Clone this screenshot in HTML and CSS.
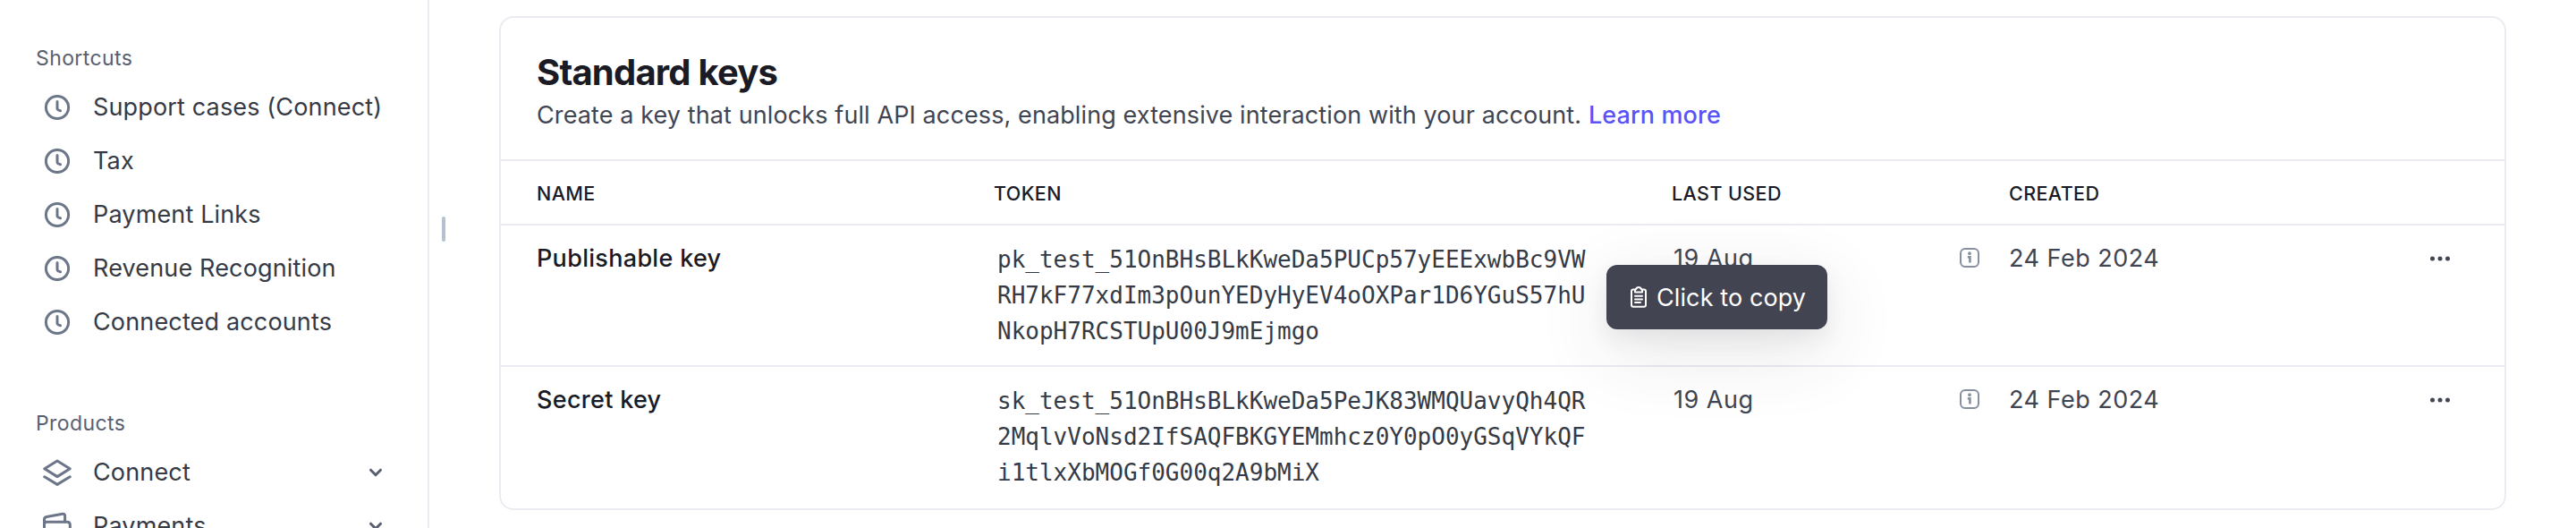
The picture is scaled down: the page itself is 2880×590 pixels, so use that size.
FILE: index.html
```html
<!DOCTYPE html>
<html lang="en">
<head>
<meta charset="utf-8">
<title>API keys</title>
<link rel="stylesheet" href="styles.css">
</head>
<body>
<svg class="defs" width="0" height="0">
  <symbol id="clock" viewBox="0 0 32 32"><circle cx="16" cy="16" r="12.6"/><path d="M16 9.6V17.2Q16 18.4 17.2 18.9L19.6 19.8"/></symbol>
  <symbol id="layers" viewBox="0 0 32 32"><path d="M16 3L30.2 11.8L16 20.6L1.8 11.8Z"/><path d="M1.8 20.8L16 29.4L30.2 20.8"/></symbol>
  <symbol id="wallet" viewBox="0 0 32 32"><path d="M1.5 30V8.6Q1.5 6 4.2 5.5L22 2.3Q24.6 2 24.6 4.5V11"/><path d="M1.5 14Q1.5 11.3 4.5 11.3H27Q30.3 11.3 30.3 14.5V30"/></symbol>
  <symbol id="chevron" viewBox="0 0 16 16"><path d="M2.5 5.2L8 10.8L13.5 5.2"/></symbol>
  <symbol id="info" viewBox="0 0 22 22"><rect x="1" y="1" width="20" height="20" rx="5"/><path class="fine" d="M8.8 10.2H11.4V16.4"/><circle class="dot" cx="11" cy="6.2" r="1.9"/></symbol>
  <symbol id="more" viewBox="0 0 24 8"><circle cx="3.5" cy="4" r="2.5"/><circle cx="12" cy="4" r="2.5"/><circle cx="20.5" cy="4" r="2.5"/></symbol>
</svg>
<div class="app">
  <nav class="sidebar">
    <h2 class="group">Shortcuts</h2>
    <ul class="links">
      <li class="link"><svg class="icon"><use href="#clock"/></svg><span>Support cases (Connect)</span></li>
      <li class="link"><svg class="icon"><use href="#clock"/></svg><span>Tax</span></li>
      <li class="link"><svg class="icon"><use href="#clock"/></svg><span>Payment Links</span></li>
      <li class="link"><svg class="icon"><use href="#clock"/></svg><span>Revenue Recognition</span></li>
      <li class="link"><svg class="icon"><use href="#clock"/></svg><span>Connected accounts</span></li>
    </ul>
    <h2 class="group products">Products</h2>
    <ul class="links">
      <li class="link"><svg class="icon"><use href="#layers"/></svg><span>Connect</span><svg class="chevron"><use href="#chevron"/></svg></li>
      <li class="link"><svg class="icon"><use href="#wallet"/></svg><span>Payments</span><svg class="chevron"><use href="#chevron"/></svg></li>
    </ul>
  </nav>
  <div class="gutter"><div class="handle"></div></div>
  <main class="card">
    <header class="head">
      <h1>Standard keys</h1>
      <p>Create a key that unlocks full API access, enabling extensive interaction with your account. <a>Learn more</a></p>
    </header>
    <div class="row labels"><span>NAME</span><span>TOKEN</span><span class="label-used">LAST USED</span><span></span><span>CREATED</span><span></span></div>
    <div class="row key">
      <span class="name">Publishable key</span>
      <code>pk_test_51OnBHsBLkKweDa5PUCp57yEEExwbBc9VWRH7kF77xdIm3pOunYEDyHyEV4oOXPar1D6YGuS57hUNkopH7RCSTUpU00J9mEjmgo</code>
      <span class="date used">19 Aug</span>
      <svg class="info"><use href="#info"/></svg>
      <span class="date">24 Feb 2024</span>
      <svg class="more"><use href="#more"/></svg>
      <div class="tooltip">
        <svg class="clip" viewBox="0 0 18 24"><rect x="1" y="3.6" width="16" height="19.2" rx="2"/><path class="clasp" d="M5 6.4V4.4Q5 3.4 6 3.2Q6.8 1 9 1T12 3.2Q13 3.4 13 4.4V6.4Z"/><path d="M5 10.8H13M5 14.4H13M5 18H11"/></svg>
        <span>Click to copy</span>
      </div>
    </div>
    <div class="row key last">
      <span class="name">Secret key</span>
      <code>sk_test_51OnBHsBLkKweDa5PeJK83WMQUavyQh4QR2MqlvVoNsd2IfSAQFBKGYEMmhcz0Y0pO0yGSqVYkQFi1tlxXbMOGf0G00q2A9bMiX</code>
      <span class="date used">19 Aug</span>
      <svg class="info"><use href="#info"/></svg>
      <span class="date">24 Feb 2024</span>
      <svg class="more"><use href="#more"/></svg>
    </div>
  </main>
</div>
</body>
</html>
```
FILE: styles.css
```css
* { box-sizing: border-box; margin: 0; padding: 0; }
body { background: #fff; font-family: Inter, "Liberation Sans", sans-serif; color: #353a44; overflow: hidden; }
.defs { display: block; position: absolute; }
.app { display: flex; height: 590px; overflow: hidden; }

.sidebar { width: 480px; flex: none; border-right: 2px solid #ebebf2; padding: 49px 48px 0 40px; overflow: hidden; }
.group { font-size: 23px; font-weight: 400; line-height: 32px; letter-spacing: 0.4px; color: #596171; margin-bottom: 9px; }
.products { margin-top: 67px; }
.links { list-style: none; }
.link { display: flex; align-items: center; height: 60px; padding-left: 8px; font-size: 27px; letter-spacing: 0.15px; }
.link span { padding-bottom: 2px; }
.icon { width: 32px; height: 32px; margin-right: 24px; flex: none; fill: none; stroke: #6c7688; stroke-width: 3; stroke-linecap: round; stroke-linejoin: round; }
.chevron { width: 16px; height: 16px; margin: 0 2px 0 auto; fill: none; stroke: #596171; stroke-width: 3; stroke-linecap: round; stroke-linejoin: round; }

.gutter { width: 78px; flex: none; padding: 242px 0 0 14px; }
.handle { width: 4px; height: 28px; border-radius: 2px; background: #b6c1cf; }

.card { width: 2244px; height: 552px; margin-top: 18px; border: 2px solid #ebebf2; border-radius: 16px; flex: none; }
.head { height: 160px; padding: 35px 40px 0; border-bottom: 2px solid #ebebf2; }
.head h1 { font-size: 40px; font-weight: 700; line-height: 52px; color: #1a1b25; letter-spacing: -0.8px; }
.head p { font-size: 27px; line-height: 44px; color: #414552; white-space: nowrap; letter-spacing: 0.105px; }
.head a { color: #5b53f5; font-weight: 500; }

.row { display: grid; grid-template-columns: 511px 757px 323px 55px 470px 1fr; padding-left: 40px; position: relative; }
.labels { height: 72px; padding-top: 2px; align-items: center; border-bottom: 2px solid #ebebf2; font-size: 21.5px; font-weight: 500; color: #1a1b25; letter-spacing: 0.4px; }
.label-used { padding-left: 1px; }
.key { height: 158px; padding-top: 17px; align-items: start; border-bottom: 2px solid #ebebf2; font-size: 27px; line-height: 40px; }
.last { border-bottom: 0; }
.name { font-weight: 500; color: #1a1b25; letter-spacing: 0.3px; }
.key code { font-family: "DejaVu Sans Mono", monospace; font-size: 26px; line-height: 40px; width: 668px; padding: 1px 0 0 4px; word-break: break-all; color: #353a44; }
.date { color: #414552; letter-spacing: 0.5px; }
.used { padding-left: 3px; }
.info { width: 22px; height: 22px; margin-top: 8px; fill: none; stroke: #8790a0; stroke-width: 2; }
.fine { stroke-width: 2.6; }
.dot { fill: #8790a0; stroke: none; }
.more { width: 24px; height: 8px; margin-top: 16px; fill: #414552; }

.tooltip { position: absolute; left: 1236px; top: 44px; width: 247px; height: 72px; display: flex; align-items: center; padding-left: 27px; border-radius: 12px; background: #424451; color: #fff; white-space: nowrap; letter-spacing: 0.1px; box-shadow: 0 24px 84px rgba(48, 49, 61, 0.12), 0 10px 24px rgba(48, 49, 61, 0.08); z-index: 1; }
.tooltip span { padding-top: 2px; }
.clip { width: 18px; height: 24px; margin-right: 11px; fill: none; stroke: #fff; stroke-width: 2; stroke-linejoin: round; stroke-linecap: round; }
.clasp { fill: #424451; }
```
